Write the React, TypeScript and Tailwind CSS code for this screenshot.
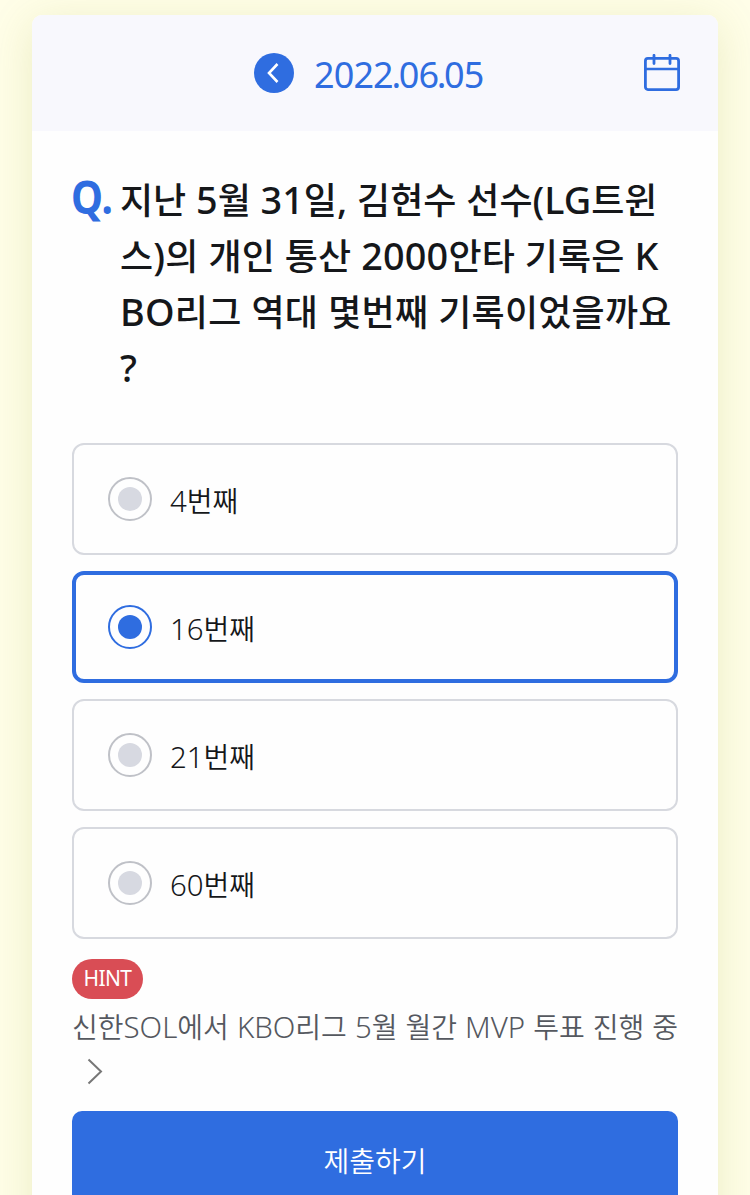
import { useState } from "react"

interface Option {
  id: number
  label: string
}

const QUESTION_LINES = [
  { text: "지난 5월 31일, 김현수 선수(LG트윈", className: "block tracking-normal" },
  { text: "스)의 개인 통산 2000안타 기록은 K", className: "block tracking-[0.14px]" },
  { text: "BO리그 역대 몇번째 기록이었을까요", className: "block tracking-[0.22px]" },
  { text: "?", className: "block tracking-normal" },
]

const OPTIONS: Option[] = [
  { id: 1, label: "4번째" },
  { id: 2, label: "16번째" },
  { id: 3, label: "21번째" },
  { id: 4, label: "60번째" },
]

// 영문/숫자는 한글보다 살짝 크게
function MixedText({ text }: { text: string }) {
  return (
    <>
      {text.split(/([A-Za-z0-9(),?]+)/).map((part, i) =>
        i % 2 === 1 ? (
          <span key={i} className="font-['Noto_Sans','Noto_Sans_CJK_KR',sans-serif] text-[1.05em] leading-none">
            {part}
          </span>
        ) : (
          part
        )
      )}
    </>
  )
}

function CalendarIcon() {
  return (
    <svg width="36" height="38" viewBox="0 0 36 38" fill="none" stroke="#2f6de0" strokeWidth="2.8">
      <rect x="1.4" y="4.4" width="33.2" height="31.2" rx="2.5" />
      <path d="M1.4 15H34.6" strokeWidth="2.6" />
      <path d="M10 1.3V9.5M26 1.3V9.5" strokeLinecap="round" />
    </svg>
  )
}

export default function App() {
  const [selected, setSelected] = useState(2)

  return (
    <div className="h-[1195px] w-[750px] overflow-hidden bg-[#fffee8] pt-[15px] pl-8 font-['Noto_Sans_CJK_KR','Noto_Sans',sans-serif] text-[#15171a]">
      <div className="h-[1300px] w-[686px] overflow-hidden rounded-[10px] bg-[#fefefe] shadow-[0_8px_44px_rgba(150,160,40,0.19)]">
        <header className="flex h-[116px] items-center bg-[#f8f8fd] pr-[38px] pl-[222px]">
          <button className="flex size-10 items-center justify-center rounded-full bg-[#2f6de0]">
            <svg width="40" height="40" viewBox="0 0 40 40" fill="none" stroke="#fff" strokeWidth="2.6">
              <path d="M23.5 11L15 20L23.5 29" />
            </svg>
          </button>
          <span className="ml-5 flex-1 pt-[3px] font-['Noto_Sans',sans-serif] text-[36px] leading-[40px] tracking-[-0.9px] whitespace-nowrap text-[#2f6de0]">
            2022<span className="-mx-[1.4px]">.</span>06<span className="-mx-[1.4px]">.</span>05
          </span>
          <CalendarIcon />
        </header>

        <main className="px-10">
          <div className="flex h-[312px] pt-[39px]">
            <div className="-mt-0.5 -ml-[1.5px] w-[49.5px] shrink-0">
              <span className="inline-block origin-left scale-x-[0.88] font-['Noto_Sans',sans-serif] text-[46px] leading-[56px] font-bold text-[#2f6de0]">
                Q.
              </span>
            </div>
            <h1 className="text-[36px] leading-[56px] font-medium whitespace-nowrap [word-spacing:1.7px]">
              {QUESTION_LINES.map((line) => (
                <span key={line.text} className={line.className}>
                  <MixedText text={line.text} />
                </span>
              ))}
            </h1>
          </div>

          <div className="flex flex-col gap-4">
            {OPTIONS.map((option) => {
              const active = option.id === selected
              return (
                <button
                  key={option.id}
                  onClick={() => setSelected(option.id)}
                  className={`flex h-28 w-[606px] items-center rounded-xl ${
                    active ? "border-4 border-[#2f6de0] pl-8" : "border-2 border-[#d7d9df] pl-[34px]"
                  }`}
                >
                  <span
                    className={`flex size-11 items-center justify-center rounded-full border-2 ${
                      active ? "border-[#2f6de0]" : "border-[#bfc1c7]"
                    }`}
                  >
                    <span className={`size-6 rounded-full ${active ? "bg-[#2f6de0]" : "bg-[#d7d9e1]"}`} />
                  </span>
                  <span className="ml-[18px] pt-0.5 text-[28px] leading-[40px] font-[350]">
                    <MixedText text={option.label} />
                  </span>
                </button>
              )
            })}
          </div>

          <div className="mt-5 flex h-10 w-[71px] items-center justify-center rounded-full bg-[#d94d55] font-['Noto_Sans',sans-serif] text-[21px] tracking-[-0.6px] text-white">
            HINT
          </div>
          <p className="mt-1 h-[46px] text-[28px] leading-[46px] font-[350] whitespace-nowrap text-[#55585f] [word-spacing:1.8px]">
            <MixedText text="신한SOL에서 KBO리그 5월 월간 MVP 투표 진행 중" />
          </p>
          <div className="flex h-[62px] pt-[9px] pl-[15px]">
            <svg width="16" height="27" viewBox="0 0 16 27" fill="none" stroke="#777" strokeWidth="2">
              <path d="M1.5 1.5L14 13.5L1.5 25.5" />
            </svg>
          </div>

          <button className="flex h-[120px] w-[606px] justify-center rounded-[10px] bg-[#2f6de0] pt-[29px] text-[28px] leading-[40px] font-[350] text-white">
            제출하기
          </button>
        </main>
      </div>
    </div>
  )
}
